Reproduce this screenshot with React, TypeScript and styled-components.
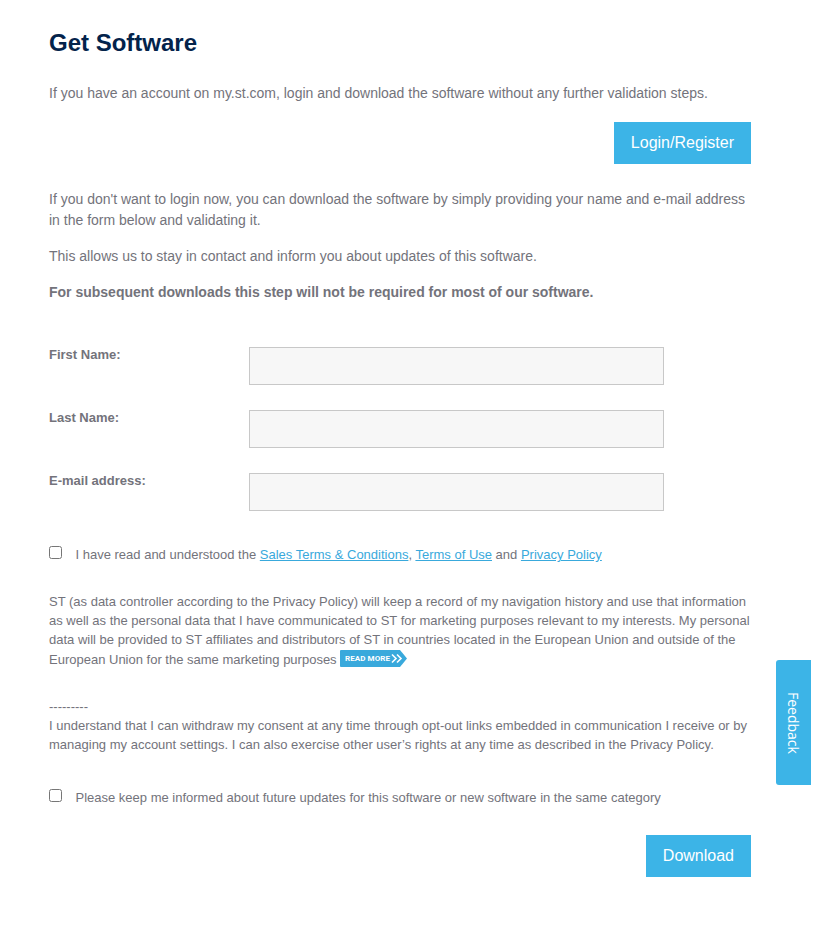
import React from "react";
import styled, { createGlobalStyle } from "styled-components";

const Global = createGlobalStyle`
  *{box-sizing:border-box}
  body{margin:0;background:#fff;color:#73737b;font-family:"Liberation Sans",Arial,sans-serif;overflow:hidden}
`;
const Page = styled.main`
  width:816px;height:931px;padding:28px 65px 0 49px;display:flex;flex-direction:column;
`;
const Title = styled.h1`
  margin:0 0 25px;font-weight:700;font-size:24px;line-height:30px;color:#03234b;
`;
const Para = styled.p<{ $strong?: boolean }>`
  margin:0 0 15px;font-size:14px;line-height:21px;white-space:nowrap;
  font-weight:${p => (p.$strong ? 700 : 400)};
`;
const Button = styled.button<{ $top: number }>`
  align-self:flex-end;flex:none;height:42px;margin:${p => p.$top}px 0 0;padding:0 17px;border:0;
  background:#3cb4e7;color:#fff;font:16px/42px "Liberation Sans",Arial,sans-serif;
`;
const Intro = styled.section`
  margin-top:25px;height:158px;
`;
const Field = styled.label`
  display:grid;grid-template-columns:200px 415px;height:63px;font-size:13px;line-height:15px;font-weight:700;
`;
const Input = styled.input`
  height:38px;border:1px solid #c8c8c8;background:#f7f7f7;outline:0;
`;
const Check = styled.label<{ $top: number }>`
  display:flex;height:19px;margin-top:${p => p.$top}px;font-size:13px;line-height:19px;white-space:nowrap;
`;
const Box = styled.input`
  width:13px;height:13px;margin:1px 13.5px 0 0;
`;
const Link = styled.a`
  color:#39a9dc;text-decoration:underline;
`;
const Legal = styled.section`
  margin-top:28px;font-size:13px;line-height:19.2px;white-space:nowrap;
`;
const More = styled.svg`
  display:inline-block;vertical-align:-3px;margin-left:3.5px;
`;
const Feedback = styled.button`
  position:fixed;left:776px;top:660px;width:35px;height:125px;padding:0;border:0;border-radius:3px 0 0 3px;
  background:#3cb4e7;color:#fff;writing-mode:vertical-rl;font:14px/35px "Open Sans",sans-serif;
`;

export default function App() {
  return (
    <>
      <Global />
      <Page>
        <Title>Get Software</Title>
        <Para>If you have an account on my.st.com, login and download the software without any further validation steps.</Para>
        <Button $top={3}>Login/Register</Button>
        <Intro>
          <Para>If you don't want to login now, you can download the software by simply providing your name and e-mail address<br />in the form below and validating it.</Para>
          <Para>This allows us to stay in contact and inform you about updates of this software.</Para>
          <Para $strong>For subsequent downloads this step will not be required for most of our software.</Para>
        </Intro>
        {["First Name:", "Last Name:", "E-mail address:"].map(name => (
          <Field key={name}><span>{name}</span><Input aria-label={name} /></Field>
        ))}
        <Check $top={9}>
          <Box type="checkbox" />
          <span>I have read and understood the <Link>Sales Terms &amp; Conditions</Link>, <Link>Terms of Use</Link> and <Link>Privacy Policy</Link></span>
        </Check>
        <Legal>
          ST (as data controller according to the Privacy Policy) will keep a record of my navigation history and use that information<br />
          as well as the personal data that I have communicated to ST for marketing purposes relevant to my interests. My personal<br />
          data will be provided to ST affiliates and distributors of ST in countries located in the European Union and outside of the<br />
          European Union for the same marketing purposes
          <More width="67" height="17" viewBox="0 0 67 17">
            <path d="M1 0h59l7 8.5-7 8.5H1q-1 0-1-1V1q0-1 1-1z" fill="#39a9dc" />
            <text x="5" y="11.2" fill="#fff" fontFamily="Roboto, sans-serif" fontWeight="700" fontSize="8" textLength="45">READ MORE</text>
            <path d="m52 4.5 4 4-4 4m5-8 4 4-4 4" fill="none" stroke="#fff" strokeWidth="1.6" />
          </More>
        </Legal>
        <Legal>
          ---------<br />
          I understand that I can withdraw my consent at any time through opt-out links embedded in communication I receive or by<br />
          managing my account settings. I can also exercise other user’s rights at any time as described in the Privacy Policy.
        </Legal>
        <Check $top={34}><Box type="checkbox" /><span>Please keep me informed about future updates for this software or new software in the same category</span></Check>
        <Button $top={28}>Download</Button>
      </Page>
      <Feedback>Feedback</Feedback>
    </>
  );
}
